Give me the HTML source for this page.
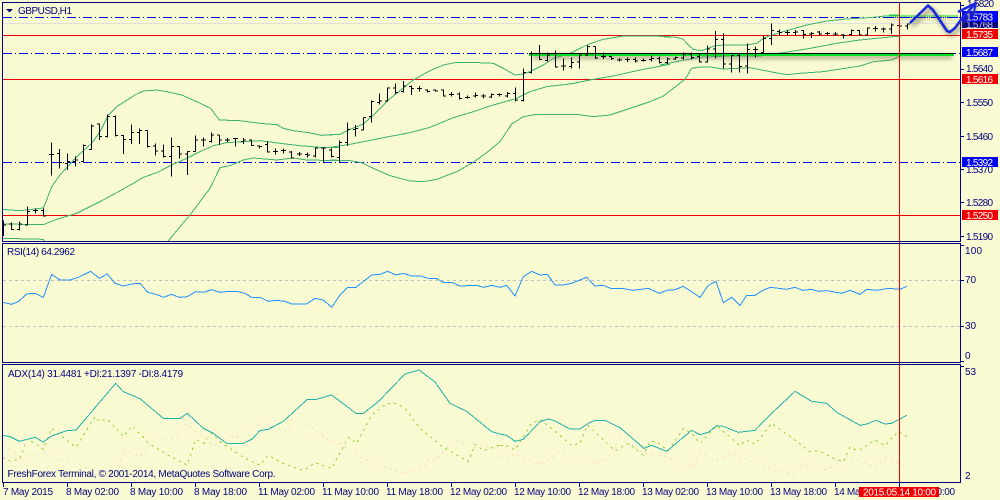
<!DOCTYPE html>
<html><head><meta charset="utf-8"><title>GBPUSD,H1</title>
<style>
html,body{margin:0;padding:0;background:#fafad2;width:1000px;height:500px;overflow:hidden}
svg{display:block}
text{font-family:"Liberation Sans",sans-serif;font-size:10px;fill:#000080}
.w{fill:#fff}
.c{fill:none;stroke-width:3;shape-rendering:crispEdges}
.h{shape-rendering:crispEdges;fill:none}
</style></head><body>
<svg width="1000" height="500" viewBox="0 0 1000 500" xmlns="http://www.w3.org/2000/svg">
<defs>
<filter id="b" x="-10%" y="-300%" width="120%" height="700%"><feGaussianBlur stdDeviation="2"/></filter>
<clipPath id="p1"><rect x="3" y="3" width="957" height="238"/></clipPath>
<clipPath id="p2"><rect x="3" y="244" width="957" height="118"/></clipPath>
<clipPath id="p3"><rect x="3" y="365" width="957" height="117"/></clipPath>
</defs>
<rect width="1000" height="500" fill="#fafad2"/>

<!-- horizontals main -->
<g class="h" clip-path="url(#p1)">
<path d="M3 23.5H960" stroke="#e0e0e0"/>
<path d="M3 35.5H960M3 79.5H960M3 215.5H960" stroke="#f00000"/>
<path d="M3 17.5H960M3 53.5H960M3 162.5H960" stroke="#0000f0" stroke-dasharray="9 3 1 3"/>
</g>

<!-- Bollinger -->
<g clip-path="url(#p1)"><g transform="scale(.33333)" stroke="#3cb371" class="c">
<polyline class="c" points="8,628 30,630 60,632 130,624 140,600 155,560 180,525 230,470 275,430 300,395 325,345 350,320 405,285 430,273 470,270 500,275 545,285 590,305 632,325 658,360 720,362 780,370 830,374 850,385 880,392 920,397 965,406 1020,403"/>
<polyline class="c" transform="translate(990,0)" points="0,403 30,403 60,388 100,372 125,350 150,325 175,300 200,280 250,240 300,212 340,195 380,187 420,187 490,190 520,205 555,225 580,222 600,215 640,195 670,175 720,160 775,133 820,118 880,108 980,108 1020,112"/>
<polyline class="c" transform="translate(1980,0)" points="0,108 50,112 70,118 85,135 100,148 125,152 165,137 200,135 260,135 290,130 310,115 330,107 380,92 440,75 500,63 560,57 640,52 675,48 710,47"/>
<polyline class="c" points="8,672 130,674 170,658 230,640 300,605 350,578 400,550 430,532 470,518 515,495 560,475 600,455 640,437 680,428 780,422 840,430 900,437 960,442 1020,442"/>
<polyline class="c" transform="translate(990,0)" points="0,442 60,433 150,415 240,398 300,382 370,353 430,335 480,318 560,295 600,275 650,260 720,252 790,238 850,228 930,210 1020,193"/>
<polyline class="c" transform="translate(1980,0)" points="0,195 60,183 120,172 200,168 300,168 370,158 450,145 530,130 600,120 680,112 725,108"/>
<polyline class="c" points="8,715 130,718 140,740"/>
<polyline class="c" points="495,735 540,680 570,645 630,565 660,503 690,497 730,480 760,474 830,480 880,474 920,480 1020,482"/>
<polyline class="c" transform="translate(990,0)" points="0,480 60,482 95,488 130,505 180,527 240,543 280,545 320,538 380,515 430,487 470,458 510,425 545,372 580,350 620,343 740,343 790,350 840,345 900,325 960,305 1000,288"/>
<polyline class="c" transform="translate(1980,0)" points="10,288 40,265 75,238 95,205 120,201 150,201 190,207 270,203 330,215 380,224 420,220 490,215 600,198 640,185 695,180 735,160"/>
</g></g>

<!-- green lines with shadow -->
<rect x="532" y="55" width="420" height="4" fill="#6a6a50" opacity=".55" filter="url(#b)"/>
<rect x="888" y="18" width="70" height="2" fill="#6a6a50" opacity=".3" filter="url(#b)"/>
<g class="h">
<path d="M529 53.5H954" stroke="#000"/>
<path d="M529 55H954" stroke="#00e020" stroke-width="2"/>
<path d="M885 16H958" stroke="#00e020" stroke-width="1"/>
<path d="M889 15H900" stroke="#3cb371"/>
<path d="M885 17.5H960" stroke="#0000f0" stroke-dasharray="9 3 1 3"/>
</g>

<!-- bars -->
<g transform="scale(.33333)">
<path class="c" stroke="#000" d="M10.5 662V708M10.5 675h7
M34.5 668V690M34.5 672h-7M34.5 688h7
M58.5 664V692M58.5 688h-7M58.5 672h7
M82.5 620V676M82.5 675h-7M82.5 635h7
M106.5 625V640M106.5 632h-7M106.5 632h7
M130.5 625V650M130.5 632h-7M130.5 648h7
M154.5 427V527M154.5 464h-7M154.5 464h7
M178.5 447V506M178.5 460h-7M178.5 488h7
M202.5 460V510M202.5 490h-7M202.5 484h7
M226.5 470V500M226.5 484h-7M226.5 480h7
M250.5 433V485M250.5 485h-7M250.5 436h7
M274.5 373V450M274.5 448h-7M274.5 378h7
M298.5 370V420M298.5 372h-7M298.5 410h7
M322.5 343V412M322.5 410h-7M322.5 350h7
M346.5 347V410M346.5 350h-7M346.5 407h7
M370.5 405V462M370.5 407h-7M370.5 418h7
M394.5 373V432M394.5 418h-7M394.5 398h7
M418.5 385V432M418.5 398h-7M418.5 392h7
M442.5 392V443M442.5 392h-7M442.5 440h7
M466.5 430V467M466.5 438h-7M466.5 453h7
M490.5 434V472M490.5 453h-7M490.5 470h7
M514.5 412V530M514.5 470h-7M514.5 440h7
M538.5 438V476M538.5 440h-7M538.5 462h7
M562.5 455V525M562.5 462h-7M562.5 455h7
M586.5 406V455M586.5 455h-7M586.5 420h7
M610.5 412V440M610.5 420h-7M610.5 420h7
M634.5 398V428M634.5 424h-7M634.5 405h7
M658.5 405V435M658.5 405h-7M658.5 420h7
M682.5 414V426M682.5 420h-7M682.5 420h7
M706.5 414V440M706.5 416h-7M706.5 416h7
M730.5 414V432M730.5 424h-7M730.5 420h7
M754.5 418V438M754.5 420h-7M754.5 436h7
M778.5 436V446M778.5 438h-7M778.5 440h7
M802.5 424V458M802.5 434h-7M802.5 456h7
M826.5 446V464M826.5 454h-7M826.5 454h7
M850.5 446V460M850.5 452h-7M850.5 452h7
M874.5 453V476M874.5 456h-7M874.5 474h7
M898.5 456V468M898.5 462h-7M898.5 462h7
M922.5 458V472M922.5 463h-7M922.5 465h7
M946.5 442V472M946.5 468h-7M946.5 444h7
M970.5 442V488M970.5 444h-7M970.5 444h7
M994.5 445V472M994.5 450h-7M994.5 470h7
M1018.5 422V488M1018.5 472h-7M1018.5 428h7
M1042.5 367V438M1042.5 428h-7M1042.5 388h7
M1066.5 375V410M1066.5 388h-7M1066.5 385h7
M1090.5 352V390M1090.5 390h-7M1090.5 352h7
M1114.5 302V368M1114.5 350h-7M1114.5 305h7
M1138.5 280V313M1138.5 308h-7M1138.5 303h7
M1162.5 262V305M1162.5 303h-7M1162.5 264h7
M1186.5 250V282M1186.5 264h-7M1186.5 278h7
M1210.5 243V278M1210.5 275h-7M1210.5 258h7
M1234.5 256V285M1234.5 260h-7M1234.5 266h7
M1258.5 258V275M1258.5 266h-7M1258.5 266h7
M1282.5 268V278M1282.5 270h-7M1282.5 274h7
M1306.5 268V275M1306.5 270h-7M1306.5 273h7
M1330.5 268V290M1330.5 270h-7M1330.5 288h7
M1354.5 276V290M1354.5 284h-7M1354.5 284h7
M1378.5 278V298M1378.5 282h-7M1378.5 296h7
M1402.5 287V296M1402.5 292h-7M1402.5 292h7
M1426.5 278V293M1426.5 288h-7M1426.5 286h7
M1450.5 282V296M1450.5 288h-7M1450.5 288h7
M1474.5 280V294M1474.5 291h-7M1474.5 283h7
M1498.5 280V290M1498.5 284h-7M1498.5 284h7
M1522.5 276V293M1522.5 288h-7M1522.5 281h7
M1546.5 262V304M1546.5 280h-7M1546.5 300h7
M1570.5 205V304M1570.5 302h-7M1570.5 218h7
M1594.5 155V220M1594.5 218h-7M1594.5 160h7
M1618.5 135V180M1618.5 160h-7M1618.5 178h7
M1642.5 157V185M1642.5 182h-7M1642.5 165h7
M1666.5 152V203M1666.5 160h-7M1666.5 201h7
M1690.5 175V212M1690.5 198h-7M1690.5 198h7
M1714.5 172V205M1714.5 200h-7M1714.5 188h7
M1738.5 163V205M1738.5 186h-7M1738.5 165h7
M1762.5 135V168M1762.5 165h-7M1762.5 140h7
M1786.5 140V177M1786.5 140h-7M1786.5 174h7
M1810.5 157V177M1810.5 170h-7M1810.5 170h7
M1834.5 170V180M1834.5 170h-7M1834.5 176h7
M1858.5 174V185M1858.5 180h-7M1858.5 180h7
M1882.5 172V186M1882.5 178h-7M1882.5 178h7
M1906.5 172V187M1906.5 178h-7M1906.5 183h7
M1930.5 175V185M1930.5 181h-7M1930.5 181h7
M1954.5 167V185M1954.5 178h-7M1954.5 176h7
M1978.5 170V190M1978.5 175h-7M1978.5 187h7
M2002.5 172V192M2002.5 187h-7M2002.5 177h7
M2026.5 170V180M2026.5 177h-7M2026.5 172h7
M2050.5 158V178M2050.5 174h-7M2050.5 162h7
M2074.5 158V178M2074.5 162h-7M2074.5 172h7
M2098.5 160V188M2098.5 170h-7M2098.5 186h7
M2122.5 137V188M2122.5 186h-7M2122.5 147h7
M2146.5 93V175M2146.5 147h-7M2146.5 118h7
M2170.5 100V205M2170.5 118h-7M2170.5 192h7
M2194.5 165V217M2194.5 192h-7M2194.5 167h7
M2218.5 160V217M2218.5 167h-7M2218.5 200h7
M2242.5 130V220M2242.5 198h-7M2242.5 148h7
M2266.5 140V172M2266.5 148h-7M2266.5 148h7
M2290.5 108V158M2290.5 158h-7M2290.5 115h7
M2314.5 70V135M2314.5 115h-7M2314.5 92h7
M2338.5 88V108M2338.5 94h-7M2338.5 97h7
M2362.5 90V106M2362.5 97h-7M2362.5 97h7
M2386.5 90V106M2386.5 97h-7M2386.5 96h7
M2410.5 90V116M2410.5 92h-7M2410.5 104h7
M2434.5 96V114M2434.5 102h-7M2434.5 100h7
M2458.5 93V107M2458.5 96h-7M2458.5 102h7
M2482.5 96V106M2482.5 100h-7M2482.5 100h7
M2506.5 96V108M2506.5 102h-7M2506.5 102h7
M2530.5 102V116M2530.5 105h-7M2530.5 107h7
M2554.5 88V107M2554.5 104h-7M2554.5 92h7
M2578.5 90V107M2578.5 92h-7M2578.5 105h7
M2602.5 82V107M2602.5 105h-7M2602.5 84h7
M2626.5 78V94M2626.5 86h-7M2626.5 86h7
M2650.5 82V97M2650.5 87h-7M2650.5 87h7
M2674.5 70V102M2674.5 87h-7M2674.5 75h7
M2698.5 48V100M2698.5 76h-7M2698.5 78h7
M2722.5 70V88M2722.5 78h-7M2722.5 72h7"/>
</g>

<!-- RSI -->
<g class="h" clip-path="url(#p2)">
<path d="M3 280.5H960M3 326.5H960" stroke="#c0c0c0" stroke-dasharray="3 3"/>
</g>
<g clip-path="url(#p2)"><g transform="scale(.33333) translate(0,720)" stroke="#1e90ff">
<polyline class="c" points="8,187 35,193 55,185 80,162 105,160 130,172 155,103 180,120 210,120 235,112 272,94 298,115 322,102 345,130 370,138 395,132 420,130 443,157 468,163 490,172 515,163 538,172 562,170 587,155 610,157 635,149 660,157 685,154 710,154 735,160 755,172 780,172 805,184 830,181 855,184 875,192 920,192 945,175 970,180 995,202 1020,165 1043,142 1068,142 1115,105 1140,103 1163,94 1188,105 1210,100 1235,108 1262,108 1285,115 1308,115 1330,127 1355,127 1380,138 1430,136 1450,142 1475,136 1500,142"/>
<polyline class="c" transform="translate(1500,0)" points="0,142 20,136 45,168 70,110 95,94 120,105 142,103 165,135 190,135 215,130 260,112 285,138 310,136 332,145 370,146 400,151 445,145 478,160 500,151 525,149 550,139 600,172 625,136 648,124 670,188 695,172 720,196 740,166 765,166 790,150 812,142 860,148 885,142 908,151 935,148 955,154 980,152 1025,160 1050,151 1080,163 1100,148 1130,151 1165,145 1200,148 1220,139"/>
</g></g>

<!-- ADX -->
<g clip-path="url(#p3)"><g transform="scale(.33333) translate(0,1080)">
<g stroke="#fdd8bc" stroke-dasharray="7 12">
<polyline class="c" points="8,255 60,290 130,280 180,300 230,310 275,330 355,335 370,268 420,290 465,238 490,238 515,235 560,192 590,215 640,258 705,225 730,250 780,185 820,200 855,215 875,178 905,200 925,195 985,240 1020,250 1075,290 1210,340 1260,330 1290,295 1310,300 1350,250 1375,243 1425,262 1450,255 1500,270"/>
<polyline class="c" transform="translate(1500,0)" points="0,290 20,295 45,283 120,313 180,276 265,310 320,300 360,235 430,280 500,290 575,322 600,280 650,300 695,278 790,320 885,345 910,310 980,330 1045,290 1125,322 1155,295 1220,320"/>
</g>
<g stroke="#9acd32" stroke-dasharray="7 12">
<polyline class="c" points="8,292 30,303 60,298 80,238 105,250 130,268 155,205 180,225 228,262 285,170 297,184 322,177 370,230 397,198 445,248 470,265 515,292 562,315 587,238 612,250 635,220 660,245 730,292 780,316 803,286 855,313 910,332 945,308 995,325 1045,232 1070,250 1115,165 1160,130 1190,130 1215,145 1260,205 1330,262 1405,305 1425,253 1450,272 1500,255"/>
<polyline class="c" transform="translate(1500,0)" points="0,257 20,257 45,270 95,190 120,178 155,205 215,257 240,250 262,195 345,272 385,250 430,285 450,245 470,245 505,272 550,205 575,220 600,250 650,197 720,257 740,240 765,253 815,190 875,233 930,275 955,272 1000,295 1030,305 1050,262 1075,272 1125,240 1155,257 1195,214 1220,230"/>
</g>
<g stroke="#20b2aa">
<polyline class="c" points="8,226 30,230 58,244 105,232 130,246 155,228 200,212 228,210 275,155 347,70 370,95 420,116 490,175 540,175 562,160 610,205 640,220 680,250 730,250 755,238 780,212 805,208 850,184 922,118 950,118 995,105 1068,160 1090,160 1135,125 1215,42 1257,30 1305,66 1350,130 1400,154 1475,215 1500,222"/>
<polyline class="c" transform="translate(1500,0)" points="0,222 20,226 45,244 70,238 120,185 145,177 165,183 210,207 240,207 265,190 285,181 315,181 360,203 432,265 455,256 500,274 575,211 600,224 625,217 650,197 670,199 715,217 765,211 810,165 885,94 935,124 980,130 1010,157 1080,196 1100,192 1128,181 1155,192 1175,190 1220,166"/>
</g>
</g></g>

<!-- crosshair vertical -->
<path class="h" d="M899.5 2V482" stroke="#f00000"/>

<!-- pane borders -->
<g class="h" stroke="#000080">
<rect x="2.5" y="2.5" width="958" height="239"/>
<rect x="2.5" y="243.5" width="958" height="119"/>
<rect x="2.5" y="364.5" width="958" height="118"/>
<path d="M961 5.5h3M961 69.5h3M961 102.5h3M961 136.5h3M961 169.5h3M961 202.5h3M961 236.5h3M961 245.5h3M961 280.5h3M961 326.5h3M961 361.5h3M961 366.5h3"/>
<path d="M3.5 483v4M67.5 483v4M131.5 483v4M195.5 483v4M259.5 483v4M323.5 483v4M387.5 483v4M451.5 483v4M515.5 483v4M579.5 483v4M643.5 483v4M707.5 483v4M771.5 483v4M835.5 483v4M899.5 483v4"/>
</g>

<!-- header triangle -->
<path d="M6 9H13L9.5 12.5Z" fill="#000080"/>
<text x="18" y="14" textLength="54">GBPUSD,H1</text>
<text x="7" y="255" textLength="68">RSI(14) 64.2962</text>
<text x="8" y="377" textLength="175">ADX(14) 31.4481 +DI:21.1397 -DI:8.4179</text>
<text x="7.5" y="477" textLength="268">FreshForex Terminal, © 2001-2014, MetaQuotes Software Corp.</text>

<!-- price axis -->
<text x="967" y="7" textLength="27">1.5820</text>
<text x="966" y="72" textLength="27">1.5640</text>
<text x="966" y="106" textLength="27">1.5550</text>
<text x="966" y="140" textLength="27">1.5460</text>
<text x="966" y="173" textLength="27">1.5370</text>
<text x="966" y="206" textLength="27">1.5280</text>
<text x="966" y="240" textLength="27">1.5190</text>

<rect x="962" y="20" width="36" height="8" fill="#000080"/>
<text class="w" x="966" y="28" textLength="27" style="fill:#c8c8e0">1.5768</text>
<rect x="962" y="11" width="36" height="11" fill="#0000f0"/>
<text class="w" x="966" y="20.5" textLength="27">1.5783</text>
<rect x="962" y="29" width="36" height="10" fill="#f00000"/>
<text class="w" x="966" y="38" textLength="27">1.5735</text>
<rect x="962" y="47" width="36" height="10" fill="#0000f0"/>
<text class="w" x="966" y="56" textLength="27">1.5687</text>
<rect x="962" y="74" width="36" height="10" fill="#f00000"/>
<text class="w" x="966" y="83" textLength="27">1.5616</text>
<rect x="962" y="157" width="36" height="10" fill="#0000f0"/>
<text class="w" x="966" y="166" textLength="27">1.5392</text>
<rect x="962" y="210" width="36" height="10" fill="#f00000"/>
<text class="w" x="966" y="219" textLength="27">1.5250</text>

<!-- blue hand-drawn line -->
<polyline points="912,26 930,9 935,13 949,34 952,35 957,31 965,20 977,8" fill="none" stroke="#606048" stroke-width="4" opacity=".5" filter="url(#b)"/>
<polyline points="910,23 928,5.5 933,10 947,31 950,32 955,28 963,17 976,3 958,12" fill="none" stroke="#1a28e0" stroke-width="2.6" stroke-linejoin="round"/>
<path d="M976 3L973 16" fill="none" stroke="#1a28e0" stroke-width="2"/>

<!-- RSI / ADX axes -->
<text x="965" y="254" textLength="17">100</text>
<text x="965" y="283" textLength="11">70</text>
<text x="965" y="329" textLength="11">30</text>
<text x="965" y="359" textLength="6">0</text>
<text x="965" y="375" textLength="11">53</text>
<text x="965" y="479" textLength="6">2</text>

<!-- time axis -->
<text x="3" y="495" textLength="50">7 May 2015</text>
<text x="66" y="495" textLength="53">8 May 02:00</text>
<text x="130" y="495" textLength="53">8 May 10:00</text>
<text x="194" y="495" textLength="53">8 May 18:00</text>
<text x="258" y="495" textLength="57">11 May 02:00</text>
<text x="322" y="495" textLength="57">11 May 10:00</text>
<text x="386" y="495" textLength="57">11 May 18:00</text>
<text x="450" y="495" textLength="57">12 May 02:00</text>
<text x="514" y="495" textLength="57">12 May 10:00</text>
<text x="578" y="495" textLength="57">12 May 18:00</text>
<text x="642" y="495" textLength="57">13 May 02:00</text>
<text x="706" y="495" textLength="57">13 May 10:00</text>
<text x="770" y="495" textLength="57">13 May 18:00</text>
<text x="834" y="495" textLength="57">14 May 02:00</text>
<text x="898" y="495" textLength="57">14 May 10:00</text>
<rect x="859" y="487" width="80" height="10" fill="#f00000"/>
<text class="w" x="863" y="495.5" textLength="73">2015.05.14 10:00</text>
</svg>
</body></html>
